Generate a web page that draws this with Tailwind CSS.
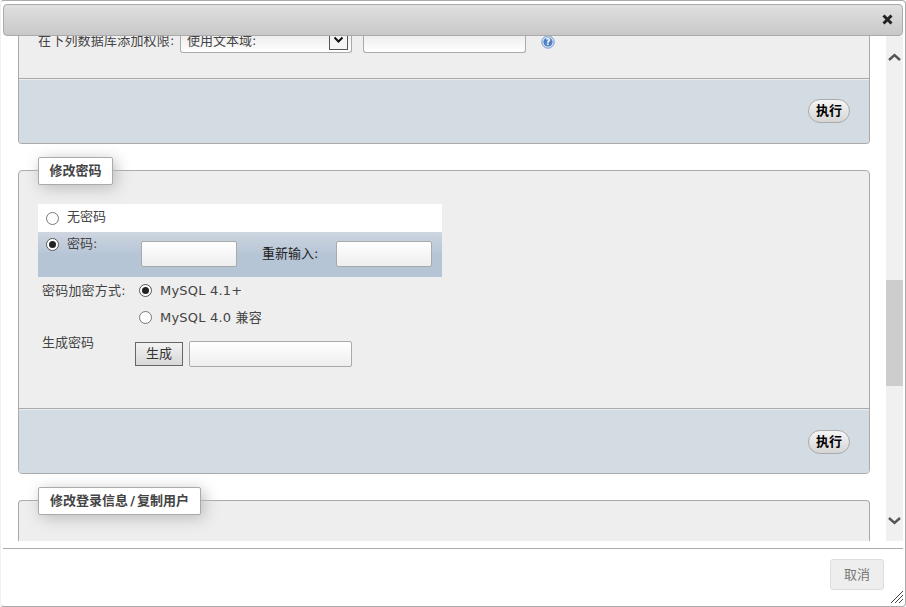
<!DOCTYPE html>
<html lang="zh">
<head>
<meta charset="UTF-8" />
<title>修改密码</title>
<script src="https://cdn.jsdelivr.net/npm/@tailwindcss/browser@4"></script>
</head>
<body class="bg-white">
<!-- Dialog -->
<div class="w-[906px] h-[607px] border border-[#aaa] border-l-[#f0f0f0] rounded-[4px] bg-white overflow-hidden flex flex-col p-[2px] pt-[3px] text-[13px] text-[#444] font-['DejaVu_Sans','Noto_Sans_CJK_SC',sans-serif]">
  <!-- Title bar -->
  <div class="relative z-10 h-[32px] shrink-0 flex items-center justify-end pr-[9px] pb-[2px] border border-[#aaa] rounded-[4px] bg-gradient-to-b from-[#e0e0e0] to-[#c8c8c8] w-[900px]">
    <svg width="11" height="11" viewBox="0 0 11 11"><path d="M1.5 1.5 L9.5 9.5 M9.5 1.5 L1.5 9.5" stroke="#222" stroke-width="3"/></svg>
  </div>

  <!-- Scrolling content -->
  <div class="h-[505px] shrink-0 flex">
    <div class="w-[883px] overflow-hidden pl-[15px] shrink-0">
      <!-- Fieldset 1 (scrolled) -->
      <div class="w-[852px] h-[108px] border-x border-b border-[#aaa] rounded-b-[4px] bg-[#eee] flex flex-col overflow-hidden">
        <div class="h-[43px] shrink-0 border-b border-[#aaa] pl-[19px] flex items-start gap-[5px]">
          <span class="mt-[-4px] leading-[18px] w-[137px] tracking-[0.2px] whitespace-nowrap shrink-0">在下列数据库添加权限:</span>
          <div class="h-[17px] w-[172px] flex justify-between items-start pl-[6px] pr-[3px] border-x border-b border-[#aaa] rounded-b-[3px] bg-gradient-to-b from-[#eee] to-[#fff]">
            <span class="mt-[-4px] leading-[18px]">使用文本域:</span>
            <div class="w-[19px] h-[14px] border-x border-b border-[#555] bg-[#f4f4f4] flex items-start justify-center">
              <svg width="11" height="8" viewBox="0 0 11 8"><path d="M1.5 1.5 L5.5 5.5 L9.5 1.5" fill="none" stroke="#111" stroke-width="2"/></svg>
            </div>
          </div>
          <div class="ml-[6px] h-[17px] w-[163px] border-x border-b border-[#aaa] rounded-b-[3px] bg-gradient-to-b from-[#eee] to-[#fff]"></div>
          <svg class="ml-[10px] mt-[-1px]" width="14" height="14" viewBox="0 0 14 14">
            <circle cx="7" cy="7" r="6.2" fill="#dbe6f5" stroke="#6f97cf"/>
            <circle cx="7" cy="7" r="4.6" fill="#4f7fc4"/>
            <text x="7" y="10" text-anchor="middle" font-size="8.5" font-weight="700" fill="#fff">?</text>
          </svg>
        </div>
        <div class="flex-1 bg-[#d3dce3] border-t border-white/50 flex items-center justify-end pr-[19px] pb-[1px]">
          <button class="h-[24px] w-[42px] rounded-[12px] border border-[#aaa] bg-gradient-to-b from-[#f6f6f6] to-[#d5d5d5] font-bold text-[13px] text-black">执行</button>
        </div>
      </div>

      <!-- Fieldset 2: change password -->
      <div class="w-[852px] h-[304px] mt-[26px] border border-[#aaa] rounded-[4px] bg-[#eee] flex flex-col overflow-hidden">
        <div class="h-[238px] shrink-0 border-b border-[#aaa] pl-[19px] pt-[33px]">
          <div class="w-[404px]">
            <div class="h-[28px] bg-white flex items-center pl-[8px] gap-[8px]">
              <span class="w-[13px] h-[13px] rounded-full border border-[#777] bg-white"></span>
              <span class="mt-[-2px]">无密码</span>
            </div>
            <div class="h-[45px] bg-gradient-to-b from-[#ced6e0] via-[#b6c5d6] to-[#b6c5d6] flex items-start">
              <span class="mt-[6px] ml-[8px] w-[13px] h-[13px] rounded-full border border-[#555] bg-white flex items-center justify-center"><span class="w-[7px] h-[7px] rounded-full bg-[#222]"></span></span>
              <span class="ml-[8px] mt-[2px] w-[74px]">密码:</span>
              <span class="mt-[9px] w-[96px] h-[26px] border border-[#aaa] rounded-[2px] bg-gradient-to-b from-[#fff] to-[#eee]"></span>
              <span class="mt-[12px] ml-[25px] w-[74px] text-[#222]">重新输入:</span>
              <span class="mt-[9px] w-[96px] h-[26px] border border-[#aaa] rounded-[2px] bg-gradient-to-b from-[#fff] to-[#eee]"></span>
            </div>
          </div>
          <div class="flex items-center h-[27px] pl-[4px]">
            <span class="w-[97px] tracking-[0.2px] whitespace-nowrap">密码加密方式:</span>
            <span class="w-[13px] h-[13px] rounded-full border border-[#555] bg-white flex items-center justify-center"><span class="w-[7px] h-[7px] rounded-full bg-[#222]"></span></span>
            <span class="ml-[8px] tracking-[0.2px]">MySQL 4.1+</span>
          </div>
          <div class="flex items-center h-[27px] pl-[101px]">
            <span class="w-[13px] h-[13px] rounded-full border border-[#777] bg-white"></span>
            <span class="ml-[8px] tracking-[0.2px]">MySQL 4.0 兼容</span>
          </div>
          <div class="flex items-start pl-[4px]">
            <span class="w-[93px] mt-[2px]">生成密码</span>
            <button class="mt-[11px] w-[48px] h-[24px] border border-[#666] bg-gradient-to-b from-[#f2f2f2] to-[#d8d8d8] text-[13px] text-[#333]">生成</button>
            <span class="ml-[6px] w-[163px] h-[26px] mt-[10px] border border-[#aaa] rounded-[2px] bg-gradient-to-b from-[#fff] to-[#eee]"></span>
          </div>
        </div>
        <div class="flex-1 bg-[#d3dce3] border-t border-white/50 flex items-center justify-end pr-[19px]">
          <button class="h-[24px] w-[42px] rounded-[12px] border border-[#aaa] bg-gradient-to-b from-[#f6f6f6] to-[#d5d5d5] font-bold text-[13px] text-black">执行</button>
        </div>
      </div>

      <!-- Fieldset 3 -->
      <div class="w-[852px] h-[60px] mt-[26px] border-x border-t border-[#aaa] rounded-t-[4px] bg-[#eee]"></div>
    </div>

    <!-- Scrollbar -->
    <div class="w-[17px] bg-[#f0f0f0] relative flex flex-col items-center justify-between pt-[17px] pb-[16px] shrink-0">
      <svg width="13" height="8" viewBox="0 0 13 8"><path d="M1 7 L6.5 2 L12 7" fill="none" stroke="#555" stroke-width="2.4"/></svg>
      <div class="absolute left-0 top-[244px] w-[17px] h-[106px] bg-[#cdcdcd]"></div>
      <svg width="13" height="8" viewBox="0 0 13 8"><path d="M1 1 L6.5 6 L12 1" fill="none" stroke="#555" stroke-width="2.4"/></svg>
    </div>
  </div>

  <!-- Footer -->
  <div class="relative mt-[7px] flex-1 border-t border-[#aaa] w-[900px] flex justify-end items-start pt-[10px] pr-[19px]">
    <button class="w-[54px] h-[31px] rounded-[3px] border border-[#ddd] bg-[#eee] text-[13px] text-[#777]">取消</button>
    <svg class="absolute right-[-1px] bottom-[0px]" width="14" height="14" viewBox="0 0 14 14"><path d="M1 13 L13 1 M5 13 L13 5 M9 13 L13 9" stroke="#444" stroke-width="1" fill="none"/></svg>
  </div>
</div>

<!-- Floating legends -->
<div class="absolute left-[38px] top-[157px] h-[28px] w-[75px] flex items-center justify-center bg-white border border-[#aaa] rounded-[2px] shadow-[3px_3px_15px_#bbb] font-bold text-[13px] text-[#444] font-['DejaVu_Sans','Noto_Sans_CJK_SC',sans-serif]">修改密码</div>
<div class="absolute left-[38px] top-[487px] h-[28px] w-[163px] flex items-center justify-center bg-white border border-[#aaa] rounded-[2px] shadow-[3px_3px_15px_#bbb] font-bold text-[13px] text-[#444] font-['DejaVu_Sans','Noto_Sans_CJK_SC',sans-serif]">修改登录信息<span class="mx-[2px]">/</span>复制用户</div>
</body>
</html>
